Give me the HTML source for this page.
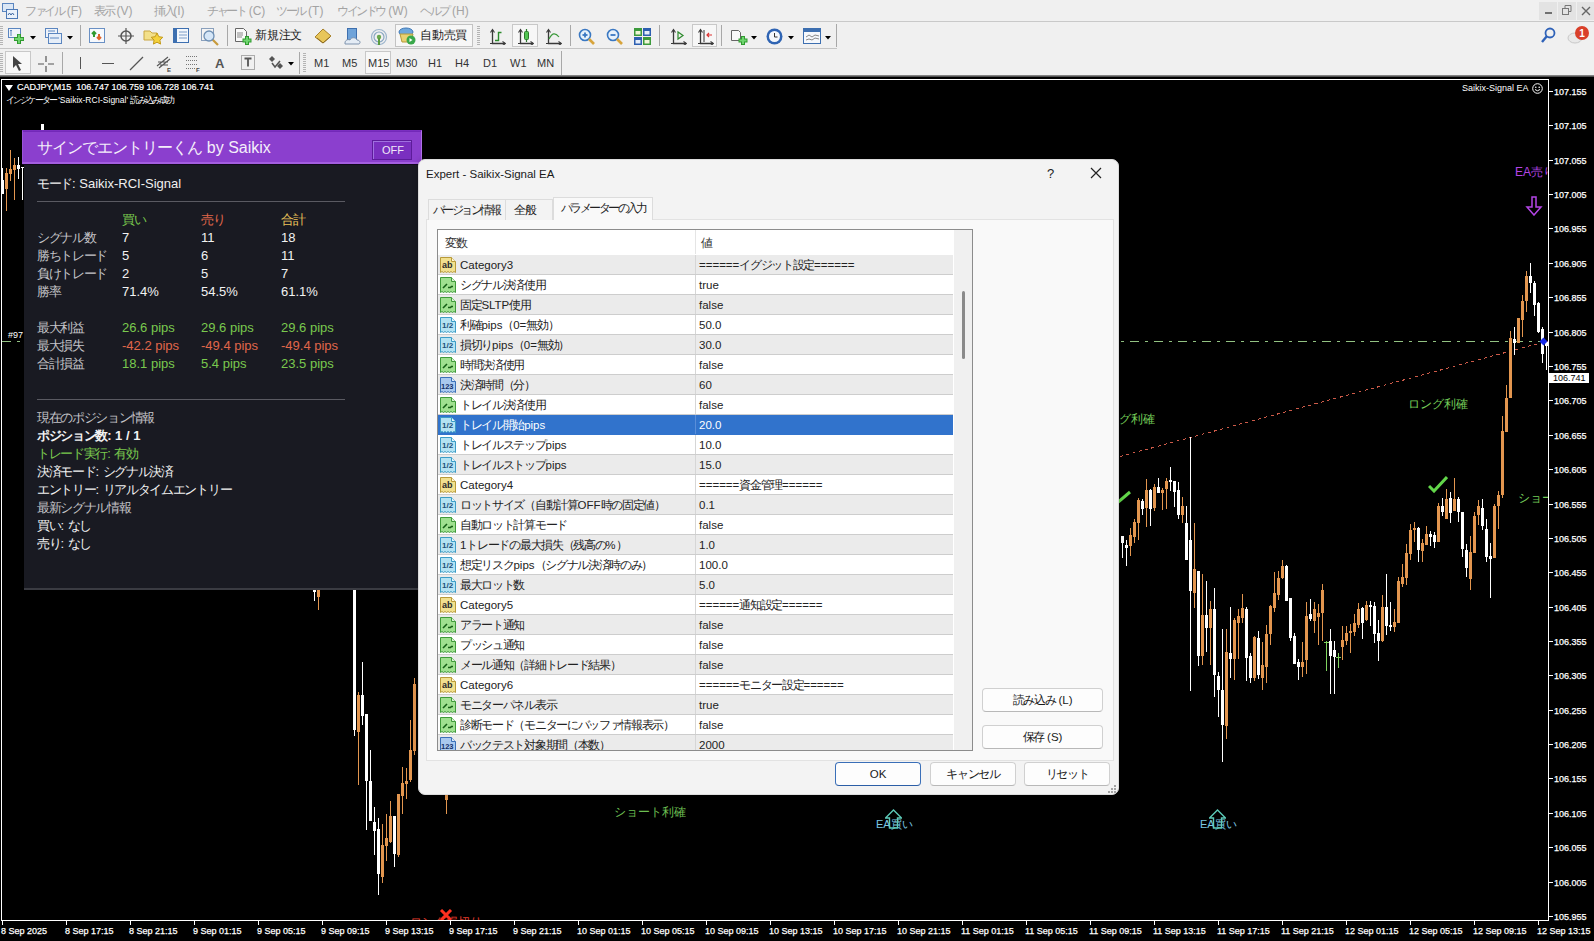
<!DOCTYPE html><html><head><meta charset="utf-8"><style>
*{margin:0;padding:0;box-sizing:border-box}
html,body{width:1594px;height:941px;overflow:hidden;background:#000;font-family:"Liberation Sans",sans-serif}
div,svg{position:absolute}
.t{white-space:nowrap;line-height:1}
i{display:inline-block;width:var(--cw,.93em);font-style:normal}
</style></head><body><div style="left:0px;top:0px;width:1594px;height:21px;background:#f0f0f0"></div><div style="left:0px;top:21px;width:1594px;height:1px;background:#c9c9c9"></div><svg style="left:2px;top:3px" width="16" height="16" viewBox="0 0 16 16"><rect x="0.5" y="0.5" width="11" height="8" fill="#dbe7f5" stroke="#5b86c0"/><rect x="4.5" y="6.5" width="11" height="9" fill="#eaf1fa" stroke="#4d79b5"/><path d="M6 12l1.5-2 1.5 2 1.5-2 1.5 2" stroke="#3c66a0" fill="none"/></svg><div class="t" style="left:25px;top:5px;font-size:12px;color:#a3a3a3;--cw:.8em"><i>フ</i><i>ァ</i><i>イ</i><i>ル</i> (F)</div><div class="t" style="left:94px;top:5px;font-size:12px;color:#a3a3a3;--cw:.8em"><i>表</i><i>示</i> (V)</div><div class="t" style="left:154px;top:5px;font-size:12px;color:#a3a3a3;--cw:.8em"><i>挿</i><i>入</i>(I)</div><div class="t" style="left:207px;top:5px;font-size:12px;color:#a3a3a3;--cw:.8em"><i>チ</i><i>ャ</i><i>ー</i><i>ト</i> (C)</div><div class="t" style="left:276px;top:5px;font-size:12px;color:#a3a3a3;--cw:.8em"><i>ツ</i><i>ー</i><i>ル</i> (T)</div><div class="t" style="left:337px;top:5px;font-size:12px;color:#a3a3a3;--cw:.8em"><i>ウ</i><i>イ</i><i>ン</i><i>ド</i><i>ウ</i> (W)</div><div class="t" style="left:420px;top:5px;font-size:12px;color:#a3a3a3;--cw:.8em"><i>ヘ</i><i>ル</i><i>プ</i> (H)</div><div style="left:1539px;top:2px;width:18px;height:18px;background:#e3e3e3"></div><div style="left:1558px;top:2px;width:18px;height:18px;background:#e3e3e3"></div><div style="left:1577px;top:2px;width:18px;height:18px;background:#e3e3e3"></div><div style="left:1545px;top:12px;width:7px;height:2px;background:#707070"></div><svg style="left:1562px;top:5px" width="10" height="10"><rect x="0.5" y="3.5" width="6" height="6" fill="none" stroke="#777"/><path d="M3 3.5V0.5h6v6H6.5" fill="none" stroke="#777"/></svg><svg style="left:1581px;top:6px" width="10" height="10"><path d="M1 1l8 8M9 1l-8 8" stroke="#666" stroke-width="1.4"/></svg><div style="left:0px;top:22px;width:1594px;height:27px;background:#f0f0f0"></div><div style="left:0px;top:48px;width:837px;height:1px;background:#c4c4c4"></div><div style="left:0px;top:26px;width:3px;height:1px;background:#b4b4b4"></div><div style="left:0px;top:28px;width:3px;height:1px;background:#b4b4b4"></div><div style="left:0px;top:30px;width:3px;height:1px;background:#b4b4b4"></div><div style="left:0px;top:32px;width:3px;height:1px;background:#b4b4b4"></div><div style="left:0px;top:34px;width:3px;height:1px;background:#b4b4b4"></div><div style="left:0px;top:36px;width:3px;height:1px;background:#b4b4b4"></div><div style="left:0px;top:38px;width:3px;height:1px;background:#b4b4b4"></div><div style="left:0px;top:40px;width:3px;height:1px;background:#b4b4b4"></div><div style="left:0px;top:42px;width:3px;height:1px;background:#b4b4b4"></div><div style="left:0px;top:44px;width:3px;height:1px;background:#b4b4b4"></div><svg style="left:8px;top:28px" width="18" height="16" viewBox="0 0 18 16"><rect x="0.5" y="0.5" width="12" height="9" fill="#eef3fa" stroke="#5b86c0"/><path d="M3 2v6M2 3l1-1 1 1" stroke="#5b86c0" fill="none"/><path d="M11 6v10M6 11h10" stroke="#2f9a2f" stroke-width="4"/><path d="M11 6.8v8.4M6.8 11h8.4" stroke="#6fd56f" stroke-width="2"/></svg><svg style="left:30px;top:36px" width="6" height="4" viewBox="0 0 6 4"><path d="M0 0h6L3 3.5z" fill="#000"/></svg><svg style="left:45px;top:28px" width="18" height="16" viewBox="0 0 18 16"><rect x="0.5" y="0.5" width="12" height="9" fill="#eef3fa" stroke="#5b86c0"/><rect x="3.5" y="5.5" width="13" height="10" fill="#e6eef8" stroke="#5b86c0"/><path d="M3 3h7M5 10h9" stroke="#5b86c0"/></svg><svg style="left:67px;top:36px" width="6" height="4" viewBox="0 0 6 4"><path d="M0 0h6L3 3.5z" fill="#000"/></svg><div style="left:80px;top:25px;width:1px;height:21px;background:#a8a8a8"></div><svg style="left:89px;top:28px" width="17" height="16" viewBox="0 0 17 16"><rect x="0.5" y="0.5" width="15" height="14" fill="#f6f9fd" stroke="#6a90c4"/><path d="M5 9V4M3 6l2-2 2 2" stroke="#2f9a2f" stroke-width="2" fill="none"/><path d="M10 6v5M8 9l2 2 2-2" stroke="#e0632a" stroke-width="2" fill="none"/></svg><svg style="left:118px;top:28px" width="16" height="16" viewBox="0 0 16 16"><circle cx="8" cy="8" r="5" fill="none" stroke="#555" stroke-width="1.5"/><path d="M8 0v16M0 8h16" stroke="#555" stroke-width="1.2"/></svg><svg style="left:143px;top:28px" width="20" height="17" viewBox="0 0 20 17"><path d="M1 3h6l2 2h5v7H1z" fill="#f3e08a" stroke="#c9a640"/><path d="M14 5l1.8 3.7 4 .6-2.9 2.8.7 4-3.6-1.9-3.6 1.9.7-4-2.9-2.8 4-.6z" fill="#f5d23c" stroke="#c39a1b"/></svg><svg style="left:173px;top:28px" width="17" height="16" viewBox="0 0 17 16"><rect x="0.5" y="0.5" width="15" height="14" fill="#f3f7fc" stroke="#3d6fb0"/><rect x="1" y="1" width="3" height="13" fill="#3d6fb0"/><path d="M6 4h8M6 7h8M6 10h8" stroke="#7a9cc8"/></svg><svg style="left:201px;top:28px" width="19" height="18" viewBox="0 0 19 18"><rect x="0.5" y="0.5" width="12" height="12" fill="#f4f4f4" stroke="#8aa0bc"/><circle cx="8" cy="8" r="5" fill="#d5e6f7" stroke="#6e8fb3" stroke-width="1.3"/><path d="M12 12l5 5" stroke="#c79a3c" stroke-width="2.2"/></svg><div style="left:227px;top:25px;width:1px;height:21px;background:#a8a8a8"></div><svg style="left:235px;top:28px" width="18" height="17" viewBox="0 0 18 17"><path d="M0.5 0.5h8l3 3v10h-11z" fill="#fafafa" stroke="#666"/><path d="M2 5h6M2 7h6M2 9h5" stroke="#888"/><path d="M12 8v9M7.5 12.5h9" stroke="#2f9a2f" stroke-width="4"/><path d="M12 9v7M8.5 12.5h7" stroke="#6fd56f" stroke-width="2"/></svg><div class="t" style="left:255px;top:29px;font-size:12px;color:#1a1a1a;--cw:.98em"><i>新</i><i>規</i><i>注</i><i>文</i></div><svg style="left:314px;top:28px" width="18" height="16" viewBox="0 0 18 16"><path d="M1 9l8-8 8 7-8 7z" fill="#e8c65a" stroke="#a9822a"/><path d="M3 10l6 5 7-6" fill="none" stroke="#8d6c22"/></svg><svg style="left:343px;top:28px" width="18" height="17" viewBox="0 0 18 17"><rect x="4.5" y="0.5" width="9" height="11" fill="#6fa3d9" stroke="#3e6fae"/><path d="M2 15c0-3 3-4 5-3 1-3 6-3 7 0 3 0 4 3 2 4H2z" fill="#e4ecf5" stroke="#7e93ad"/></svg><svg style="left:370px;top:28px" width="18" height="17" viewBox="0 0 18 17"><circle cx="9" cy="9" r="7.5" fill="none" stroke="#9cb5cc" stroke-width="1.2"/><circle cx="9" cy="9" r="5" fill="none" stroke="#8aa7c2" stroke-width="1.2"/><circle cx="9" cy="9" r="2.2" fill="#6aa84f"/><path d="M9 10v7" stroke="#5b9c3f" stroke-width="2"/></svg><div style="left:395px;top:24px;width:78px;height:23px;background:#f7f7f7;border:1px solid #c3c3c3"></div><svg style="left:398px;top:27px" width="18" height="18" viewBox="0 0 18 18"><ellipse cx="8" cy="5" rx="7" ry="4" fill="#6ea7dc" stroke="#3f78b6"/><path d="M2 7l2 8h9l2-8z" fill="#e9d172" stroke="#b59a3a"/><circle cx="13" cy="13" r="4.5" fill="#39a84a"/><path d="M11.5 11v4l3-2z" fill="#fff"/></svg><div class="t" style="left:420px;top:29px;font-size:12px;color:#1a1a1a;--cw:.98em"><i>自</i><i>動</i><i>売</i><i>買</i></div><div style="left:477px;top:26px;width:3px;height:1px;background:#b4b4b4"></div><div style="left:477px;top:28px;width:3px;height:1px;background:#b4b4b4"></div><div style="left:477px;top:30px;width:3px;height:1px;background:#b4b4b4"></div><div style="left:477px;top:32px;width:3px;height:1px;background:#b4b4b4"></div><div style="left:477px;top:34px;width:3px;height:1px;background:#b4b4b4"></div><div style="left:477px;top:36px;width:3px;height:1px;background:#b4b4b4"></div><div style="left:477px;top:38px;width:3px;height:1px;background:#b4b4b4"></div><div style="left:477px;top:40px;width:3px;height:1px;background:#b4b4b4"></div><div style="left:477px;top:42px;width:3px;height:1px;background:#b4b4b4"></div><div style="left:477px;top:44px;width:3px;height:1px;background:#b4b4b4"></div><svg style="left:489px;top:28px" width="17" height="17" viewBox="0 0 17 17"><path d="M3.5 2v13.5H16" stroke="#3a3a3a" stroke-width="1.3" fill="none"/><path d="M1.5 4.5l2-3 2 3M13.5 13.5l3 2-3 2" stroke="#3a3a3a" stroke-width="1.1" fill="none"/><path d="M1 15.5h2.5" stroke="#3a3a3a"/><path d="M6 12.5h3.5V4.5h3" stroke="#2c8a2c" stroke-width="1.4" fill="none"/></svg><div style="left:512px;top:24px;width:26px;height:23px;background:#f7f7f7;border:1px solid #c8c8c8"></div><svg style="left:517px;top:28px" width="17" height="17" viewBox="0 0 17 17"><path d="M3.5 2v13.5H16" stroke="#3a3a3a" stroke-width="1.3" fill="none"/><path d="M1.5 4.5l2-3 2 3M13.5 13.5l3 2-3 2" stroke="#3a3a3a" stroke-width="1.1" fill="none"/><path d="M1 15.5h2.5" stroke="#3a3a3a"/><rect x="7.5" y="3.5" width="4" height="8" rx="1" fill="#52c452" stroke="#2c7a2c"/><path d="M9.5 1v2.5M9.5 11.5v2.5" stroke="#2c7a2c" stroke-width="1.2"/></svg><svg style="left:545px;top:28px" width="17" height="17" viewBox="0 0 17 17"><path d="M3.5 2v13.5H16" stroke="#3a3a3a" stroke-width="1.3" fill="none"/><path d="M1.5 4.5l2-3 2 3M13.5 13.5l3 2-3 2" stroke="#3a3a3a" stroke-width="1.1" fill="none"/><path d="M1 15.5h2.5" stroke="#3a3a3a"/><path d="M4 11c3-6 6-7 10-2" stroke="#3c9a3c" stroke-width="1.2" fill="none"/></svg><div style="left:570px;top:25px;width:1px;height:21px;background:#a8a8a8"></div><svg style="left:578px;top:28px" width="17" height="17" viewBox="0 0 17 17"><circle cx="7" cy="7" r="5.5" fill="#e8f2fb" stroke="#3a78c2" stroke-width="1.6"/><path d="M11 11l5 5" stroke="#d7a43c" stroke-width="2.6"/><path d="M4.5 7h5" stroke="#3a78c2" stroke-width="1.8"/><path d="M7 4.5v5" stroke="#3a78c2" stroke-width="1.8"/></svg><svg style="left:606px;top:28px" width="17" height="17" viewBox="0 0 17 17"><circle cx="7" cy="7" r="5.5" fill="#e8f2fb" stroke="#3a78c2" stroke-width="1.6"/><path d="M11 11l5 5" stroke="#d7a43c" stroke-width="2.6"/><path d="M4.5 7h5" stroke="#3a78c2" stroke-width="1.8"/></svg><svg style="left:634px;top:28px" width="17" height="17" viewBox="0 0 17 17"><rect x="0" y="0" width="8" height="8" fill="#3c9a3c"/><rect x="9" y="0" width="8" height="8" fill="#2d5fb0"/><rect x="0" y="9" width="8" height="8" fill="#2d5fb0"/><rect x="9" y="9" width="8" height="8" fill="#3c9a3c"/><rect x="1.5" y="3" width="5" height="3.5" fill="#f0f6d8"/><rect x="10.5" y="3" width="5" height="3.5" fill="#e6eefa"/><rect x="1.5" y="12" width="5" height="3.5" fill="#e6eefa"/><rect x="10.5" y="12" width="5" height="3.5" fill="#f0f6d8"/></svg><div style="left:659px;top:25px;width:1px;height:21px;background:#a8a8a8"></div><svg style="left:670px;top:28px" width="17" height="17" viewBox="0 0 17 17"><path d="M3.5 2v13.5H16" stroke="#3a3a3a" stroke-width="1.3" fill="none"/><path d="M1.5 4.5l2-3 2 3M13.5 13.5l3 2-3 2" stroke="#3a3a3a" stroke-width="1.1" fill="none"/><path d="M1 15.5h2.5" stroke="#3a3a3a"/><path d="M8 4v7l5-3.5z" fill="none" stroke="#2c8a2c" stroke-width="1.2"/></svg><div style="left:692px;top:24px;width:25px;height:23px;background:#f7f7f7;border:1px solid #c8c8c8"></div><svg style="left:697px;top:28px" width="17" height="17" viewBox="0 0 17 17"><path d="M3.5 2v13.5H16" stroke="#3a3a3a" stroke-width="1.3" fill="none"/><path d="M1.5 4.5l2-3 2 3M13.5 13.5l3 2-3 2" stroke="#3a3a3a" stroke-width="1.1" fill="none"/><path d="M1 15.5h2.5" stroke="#3a3a3a"/><path d="M7 2v12" stroke="#333"/><path d="M15 7h-5M12 5l-2 2 2 2" stroke="#d33" stroke-width="1.2" fill="none"/></svg><div style="left:721px;top:25px;width:1px;height:21px;background:#a8a8a8"></div><svg style="left:731px;top:28px" width="18" height="18" viewBox="0 0 18 18"><path d="M0.5 2.5h7l2 2v8h-9z" fill="#fafafa" stroke="#666"/><path d="M12 8v9M7.5 12.5h9" stroke="#2f9a2f" stroke-width="4"/><path d="M12 9v7M8.5 12.5h7" stroke="#6fd56f" stroke-width="2"/></svg><svg style="left:751px;top:36px" width="6" height="4" viewBox="0 0 6 4"><path d="M0 0h6L3 3.5z" fill="#000"/></svg><svg style="left:766px;top:28px" width="17" height="17" viewBox="0 0 17 17"><circle cx="8.5" cy="8.5" r="8" fill="#2f64b3"/><circle cx="8.5" cy="8.5" r="5.5" fill="#f4f8fc"/><path d="M8.5 5v4h3" stroke="#333" fill="none"/></svg><svg style="left:788px;top:36px" width="6" height="4" viewBox="0 0 6 4"><path d="M0 0h6L3 3.5z" fill="#000"/></svg><svg style="left:803px;top:28px" width="18" height="16" viewBox="0 0 18 16"><rect x="0.5" y="0.5" width="17" height="15" fill="#f5f8fc" stroke="#3d6fb0"/><rect x="1" y="1" width="16" height="3" fill="#3d6fb0"/><path d="M3 9l3-2 3 2 3-2 4 1M3 12l3-1 3 1 3-2 4 1" stroke="#888" fill="none"/></svg><svg style="left:825px;top:36px" width="6" height="4" viewBox="0 0 6 4"><path d="M0 0h6L3 3.5z" fill="#000"/></svg><div style="left:836px;top:24px;width:1px;height:23px;background:#a8a8a8"></div><svg style="left:1540px;top:27px" width="16" height="17" viewBox="0 0 16 17"><circle cx="10" cy="6" r="4.5" fill="none" stroke="#2f62b8" stroke-width="1.8"/><path d="M7 9l-5 6" stroke="#2f62b8" stroke-width="2.4"/></svg><svg style="left:1566px;top:25px" width="26" height="21" viewBox="0 0 26 21"><ellipse cx="9" cy="13" rx="7" ry="5" fill="#e9e9e9" stroke="#c8c8c8"/><circle cx="16" cy="8" r="7" fill="#d9402a"/><text x="16" y="12" font-size="10" font-family="Liberation Sans" fill="#fff" text-anchor="middle" font-weight="bold">1</text></svg><div style="left:0px;top:49px;width:1594px;height:26px;background:#f0f0f0"></div><div style="left:0px;top:75px;width:1594px;height:2px;background:linear-gradient(#9a9a9a,#3a3a3a)"></div><div style="left:0px;top:53px;width:3px;height:1px;background:#b4b4b4"></div><div style="left:0px;top:55px;width:3px;height:1px;background:#b4b4b4"></div><div style="left:0px;top:57px;width:3px;height:1px;background:#b4b4b4"></div><div style="left:0px;top:59px;width:3px;height:1px;background:#b4b4b4"></div><div style="left:0px;top:61px;width:3px;height:1px;background:#b4b4b4"></div><div style="left:0px;top:63px;width:3px;height:1px;background:#b4b4b4"></div><div style="left:0px;top:65px;width:3px;height:1px;background:#b4b4b4"></div><div style="left:0px;top:67px;width:3px;height:1px;background:#b4b4b4"></div><div style="left:0px;top:69px;width:3px;height:1px;background:#b4b4b4"></div><div style="left:0px;top:71px;width:3px;height:1px;background:#b4b4b4"></div><div style="left:5px;top:51px;width:26px;height:23px;background:#f7f7f7;border:1px solid #c8c8c8"></div><svg style="left:12px;top:55px" width="11" height="16" viewBox="0 0 11 16"><path d="M1 1v12l3-3 3 6 2-1-3-6h4z" fill="#444"/></svg><svg style="left:38px;top:56px" width="16" height="16" viewBox="0 0 16 16"><path d="M8 0v6M8 10v6M0 8h6M10 8h6" stroke="#555" stroke-width="1.2"/></svg><div style="left:62px;top:52px;width:1px;height:22px;background:#a8a8a8"></div><div style="left:80px;top:57px;width:1px;height:12px;background:#555"></div><div style="left:102px;top:63px;width:12px;height:1px;background:#555"></div><svg style="left:129px;top:56px" width="15" height="15" viewBox="0 0 15 15"><path d="M1 14L14 1" stroke="#555" stroke-width="1.2"/></svg><svg style="left:156px;top:55px" width="16" height="18" viewBox="0 0 16 18"><path d="M1 11L12 2M3 13L14 4M2 7h10M4 10h8" stroke="#555" stroke-width="1.1"/><text x="11" y="17" font-size="6" font-family="Liberation Sans" font-weight="bold" fill="#444">E</text></svg><svg style="left:185px;top:55px" width="16" height="18" viewBox="0 0 16 18"><path d="M1 1.5h12M1 5.5h12M1 9.5h12M1 13.5h9" stroke="#777" stroke-dasharray="1 1"/><text x="11" y="17" font-size="6" font-family="Liberation Sans" font-weight="bold" fill="#444">F</text></svg><div class="t" style="left:215px;top:57px;font-size:13px;font-weight:bold;color:#555">A</div><svg style="left:241px;top:55px" width="14" height="15" viewBox="0 0 14 15"><rect x="0.5" y="0.5" width="13" height="14" fill="none" stroke="#666" stroke-dasharray="1 1"/><path d="M3.5 3.5h7M7 3.5v8" stroke="#555" stroke-width="1.8"/></svg><svg style="left:268px;top:56px" width="16" height="14" viewBox="0 0 16 14"><path d="M4 0l3 3-3 3-3-3z" fill="#555"/><path d="M4 7l3 4 5-6" stroke="#555" stroke-width="1.5" fill="none"/><path d="M12 7l3 3-3 3-3-3z" fill="#555"/></svg><svg style="left:288px;top:62px" width="6" height="4" viewBox="0 0 6 4"><path d="M0 0h6L3 3.5z" fill="#000"/></svg><div style="left:299px;top:52px;width:1px;height:22px;background:#a8a8a8"></div><div style="left:303px;top:53px;width:3px;height:1px;background:#b4b4b4"></div><div style="left:303px;top:55px;width:3px;height:1px;background:#b4b4b4"></div><div style="left:303px;top:57px;width:3px;height:1px;background:#b4b4b4"></div><div style="left:303px;top:59px;width:3px;height:1px;background:#b4b4b4"></div><div style="left:303px;top:61px;width:3px;height:1px;background:#b4b4b4"></div><div style="left:303px;top:63px;width:3px;height:1px;background:#b4b4b4"></div><div style="left:303px;top:65px;width:3px;height:1px;background:#b4b4b4"></div><div style="left:303px;top:67px;width:3px;height:1px;background:#b4b4b4"></div><div style="left:303px;top:69px;width:3px;height:1px;background:#b4b4b4"></div><div style="left:303px;top:71px;width:3px;height:1px;background:#b4b4b4"></div><div style="left:365px;top:51px;width:26px;height:23px;background:#f7f7f7;border:1px solid #c8c8c8"></div><div class="t" style="left:314px;top:58px;font-size:11px;color:#333">M1</div><div class="t" style="left:342px;top:58px;font-size:11px;color:#333">M5</div><div class="t" style="left:368px;top:58px;font-size:11px;color:#333">M15</div><div class="t" style="left:396px;top:58px;font-size:11px;color:#333">M30</div><div class="t" style="left:428px;top:58px;font-size:11px;color:#333">H1</div><div class="t" style="left:455px;top:58px;font-size:11px;color:#333">H4</div><div class="t" style="left:483px;top:58px;font-size:11px;color:#333">D1</div><div class="t" style="left:510px;top:58px;font-size:11px;color:#333">W1</div><div class="t" style="left:537px;top:58px;font-size:11px;color:#333">MN</div><div style="left:561px;top:51px;width:1px;height:24px;background:#a8a8a8"></div><div style="left:0px;top:77px;width:1594px;height:864px;background:#000"></div><div style="left:1px;top:79px;width:1548px;height:842px;border:1px solid #fff;border-right:1px solid #fff"></div><svg style="left:0;top:0" width="1594" height="941" shape-rendering="crispEdges"><style>.ax{font:9px "Liberation Sans",sans-serif;fill:#fff;stroke:#fff;stroke-width:.25px}</style><rect x="1549" y="91" width="4" height="1" fill="#fff"/><text x="1554" y="95" class="ax">107.155</text><rect x="1549" y="125" width="4" height="1" fill="#fff"/><text x="1554" y="129" class="ax">107.105</text><rect x="1549" y="160" width="4" height="1" fill="#fff"/><text x="1554" y="164" class="ax">107.055</text><rect x="1549" y="194" width="4" height="1" fill="#fff"/><text x="1554" y="198" class="ax">107.005</text><rect x="1549" y="228" width="4" height="1" fill="#fff"/><text x="1554" y="232" class="ax">106.955</text><rect x="1549" y="263" width="4" height="1" fill="#fff"/><text x="1554" y="267" class="ax">106.905</text><rect x="1549" y="297" width="4" height="1" fill="#fff"/><text x="1554" y="301" class="ax">106.855</text><rect x="1549" y="332" width="4" height="1" fill="#fff"/><text x="1554" y="336" class="ax">106.805</text><rect x="1549" y="366" width="4" height="1" fill="#fff"/><text x="1554" y="370" class="ax">106.755</text><rect x="1549" y="400" width="4" height="1" fill="#fff"/><text x="1554" y="404" class="ax">106.705</text><rect x="1549" y="435" width="4" height="1" fill="#fff"/><text x="1554" y="439" class="ax">106.655</text><rect x="1549" y="469" width="4" height="1" fill="#fff"/><text x="1554" y="473" class="ax">106.605</text><rect x="1549" y="504" width="4" height="1" fill="#fff"/><text x="1554" y="508" class="ax">106.555</text><rect x="1549" y="538" width="4" height="1" fill="#fff"/><text x="1554" y="542" class="ax">106.505</text><rect x="1549" y="572" width="4" height="1" fill="#fff"/><text x="1554" y="576" class="ax">106.455</text><rect x="1549" y="607" width="4" height="1" fill="#fff"/><text x="1554" y="611" class="ax">106.405</text><rect x="1549" y="641" width="4" height="1" fill="#fff"/><text x="1554" y="645" class="ax">106.355</text><rect x="1549" y="675" width="4" height="1" fill="#fff"/><text x="1554" y="679" class="ax">106.305</text><rect x="1549" y="710" width="4" height="1" fill="#fff"/><text x="1554" y="714" class="ax">106.255</text><rect x="1549" y="744" width="4" height="1" fill="#fff"/><text x="1554" y="748" class="ax">106.205</text><rect x="1549" y="778" width="4" height="1" fill="#fff"/><text x="1554" y="782" class="ax">106.155</text><rect x="1549" y="813" width="4" height="1" fill="#fff"/><text x="1554" y="817" class="ax">106.105</text><rect x="1549" y="847" width="4" height="1" fill="#fff"/><text x="1554" y="851" class="ax">106.055</text><rect x="1549" y="882" width="4" height="1" fill="#fff"/><text x="1554" y="886" class="ax">106.005</text><rect x="1549" y="916" width="4" height="1" fill="#fff"/><text x="1554" y="920" class="ax">105.955</text><rect x="2" y="921" width="1" height="4" fill="#fff"/><text x="1" y="934" class="ax">8 Sep 2025</text><rect x="66" y="921" width="1" height="4" fill="#fff"/><text x="65" y="934" class="ax">8 Sep 17:15</text><rect x="130" y="921" width="1" height="4" fill="#fff"/><text x="129" y="934" class="ax">8 Sep 21:15</text><rect x="194" y="921" width="1" height="4" fill="#fff"/><text x="193" y="934" class="ax">9 Sep 01:15</text><rect x="258" y="921" width="1" height="4" fill="#fff"/><text x="257" y="934" class="ax">9 Sep 05:15</text><rect x="322" y="921" width="1" height="4" fill="#fff"/><text x="321" y="934" class="ax">9 Sep 09:15</text><rect x="386" y="921" width="1" height="4" fill="#fff"/><text x="385" y="934" class="ax">9 Sep 13:15</text><rect x="450" y="921" width="1" height="4" fill="#fff"/><text x="449" y="934" class="ax">9 Sep 17:15</text><rect x="514" y="921" width="1" height="4" fill="#fff"/><text x="513" y="934" class="ax">9 Sep 21:15</text><rect x="578" y="921" width="1" height="4" fill="#fff"/><text x="577" y="934" class="ax">10 Sep 01:15</text><rect x="642" y="921" width="1" height="4" fill="#fff"/><text x="641" y="934" class="ax">10 Sep 05:15</text><rect x="706" y="921" width="1" height="4" fill="#fff"/><text x="705" y="934" class="ax">10 Sep 09:15</text><rect x="770" y="921" width="1" height="4" fill="#fff"/><text x="769" y="934" class="ax">10 Sep 13:15</text><rect x="834" y="921" width="1" height="4" fill="#fff"/><text x="833" y="934" class="ax">10 Sep 17:15</text><rect x="898" y="921" width="1" height="4" fill="#fff"/><text x="897" y="934" class="ax">10 Sep 21:15</text><rect x="962" y="921" width="1" height="4" fill="#fff"/><text x="961" y="934" class="ax">11 Sep 01:15</text><rect x="1026" y="921" width="1" height="4" fill="#fff"/><text x="1025" y="934" class="ax">11 Sep 05:15</text><rect x="1090" y="921" width="1" height="4" fill="#fff"/><text x="1089" y="934" class="ax">11 Sep 09:15</text><rect x="1154" y="921" width="1" height="4" fill="#fff"/><text x="1153" y="934" class="ax">11 Sep 13:15</text><rect x="1218" y="921" width="1" height="4" fill="#fff"/><text x="1217" y="934" class="ax">11 Sep 17:15</text><rect x="1282" y="921" width="1" height="4" fill="#fff"/><text x="1281" y="934" class="ax">11 Sep 21:15</text><rect x="1346" y="921" width="1" height="4" fill="#fff"/><text x="1345" y="934" class="ax">12 Sep 01:15</text><rect x="1410" y="921" width="1" height="4" fill="#fff"/><text x="1409" y="934" class="ax">12 Sep 05:15</text><rect x="1474" y="921" width="1" height="4" fill="#fff"/><text x="1473" y="934" class="ax">12 Sep 09:15</text><rect x="1538" y="921" width="1" height="4" fill="#fff"/><text x="1537" y="934" class="ax">12 Sep 13:15</text><line x1="2" y1="341.5" x2="1548" y2="341.5" stroke="#92c282" stroke-width="1" stroke-dasharray="9 6 3 6"/><line x1="1120" y1="456.5" x2="1548" y2="341" stroke="#cc5a48" stroke-width="1" stroke-dasharray="3 3.5"/><rect x="2" y="168" width="1" height="26" fill="#ffffff"/><rect x="1" y="180" width="3" height="14" fill="#ffffff"/><rect x="6" y="168" width="1" height="43" fill="#e3964f"/><rect x="5" y="173" width="3" height="16" fill="#e3964f"/><rect x="10" y="150" width="1" height="31" fill="#e3964f"/><rect x="9" y="169" width="3" height="5" fill="#e3964f"/><rect x="14" y="158" width="1" height="42" fill="#e3964f"/><rect x="13" y="165" width="3" height="5" fill="#e3964f"/><rect x="18" y="157" width="1" height="22" fill="#ffffff"/><rect x="17" y="165" width="3" height="4" fill="#ffffff"/><rect x="22" y="167" width="1" height="33" fill="#ffffff"/><rect x="21" y="167" width="3" height="1" fill="#ffffff"/><rect x="314" y="589" width="1" height="12" fill="#ffffff"/><rect x="313" y="589" width="3" height="3" fill="#ffffff"/><rect x="318" y="589" width="1" height="21" fill="#e3964f"/><rect x="317" y="589" width="3" height="8" fill="#e3964f"/><rect x="354" y="589" width="1" height="147" fill="#ffffff"/><rect x="353" y="589" width="3" height="141" fill="#ffffff"/><rect x="358" y="692" width="1" height="93" fill="#e3964f"/><rect x="357" y="695" width="3" height="37" fill="#e3964f"/><rect x="362" y="662" width="1" height="63" fill="#ffffff"/><rect x="361" y="695" width="3" height="21" fill="#ffffff"/><rect x="366" y="714" width="1" height="116" fill="#ffffff"/><rect x="365" y="714" width="3" height="67" fill="#ffffff"/><rect x="370" y="750" width="1" height="71" fill="#ffffff"/><rect x="369" y="781" width="3" height="40" fill="#ffffff"/><rect x="374" y="807" width="1" height="48" fill="#ffffff"/><rect x="373" y="822" width="3" height="9" fill="#ffffff"/><rect x="378" y="818" width="1" height="77" fill="#ffffff"/><rect x="377" y="829" width="3" height="45" fill="#ffffff"/><rect x="382" y="824" width="1" height="59" fill="#e3964f"/><rect x="381" y="845" width="3" height="32" fill="#e3964f"/><rect x="386" y="814" width="1" height="47" fill="#e3964f"/><rect x="385" y="838" width="3" height="8" fill="#e3964f"/><rect x="390" y="801" width="1" height="42" fill="#e3964f"/><rect x="389" y="816" width="3" height="26" fill="#e3964f"/><rect x="394" y="816" width="1" height="51" fill="#ffffff"/><rect x="393" y="816" width="3" height="38" fill="#ffffff"/><rect x="398" y="794" width="1" height="63" fill="#e3964f"/><rect x="397" y="794" width="3" height="61" fill="#e3964f"/><rect x="402" y="767" width="1" height="47" fill="#e3964f"/><rect x="401" y="783" width="3" height="13" fill="#e3964f"/><rect x="406" y="768" width="1" height="31" fill="#e3964f"/><rect x="405" y="781" width="3" height="3" fill="#e3964f"/><rect x="410" y="720" width="1" height="62" fill="#e3964f"/><rect x="409" y="750" width="3" height="30" fill="#e3964f"/><rect x="414" y="678" width="1" height="77" fill="#e3964f"/><rect x="413" y="684" width="3" height="67" fill="#e3964f"/><rect x="446" y="780" width="1" height="34" fill="#e3964f"/><rect x="445" y="790" width="3" height="10" fill="#e3964f"/><rect x="1122" y="536" width="1" height="22" fill="#ffffff"/><rect x="1121" y="536" width="3" height="7" fill="#ffffff"/><rect x="1126" y="540" width="1" height="26" fill="#ffffff"/><rect x="1125" y="545" width="3" height="3" fill="#ffffff"/><rect x="1130" y="528" width="1" height="28" fill="#e3964f"/><rect x="1129" y="535" width="3" height="11" fill="#e3964f"/><rect x="1134" y="519" width="1" height="24" fill="#e3964f"/><rect x="1133" y="522" width="3" height="15" fill="#e3964f"/><rect x="1138" y="498" width="1" height="42" fill="#e3964f"/><rect x="1137" y="500" width="3" height="23" fill="#e3964f"/><rect x="1142" y="499" width="1" height="16" fill="#ffffff"/><rect x="1141" y="501" width="3" height="8" fill="#ffffff"/><rect x="1146" y="479" width="1" height="48" fill="#e3964f"/><rect x="1145" y="490" width="3" height="18" fill="#e3964f"/><rect x="1150" y="489" width="1" height="37" fill="#ffffff"/><rect x="1149" y="490" width="3" height="19" fill="#ffffff"/><rect x="1154" y="484" width="1" height="27" fill="#e3964f"/><rect x="1153" y="487" width="3" height="21" fill="#e3964f"/><rect x="1158" y="478" width="1" height="15" fill="#ffffff"/><rect x="1157" y="487" width="3" height="6" fill="#ffffff"/><rect x="1162" y="488" width="1" height="22" fill="#e3964f"/><rect x="1161" y="490" width="3" height="3" fill="#e3964f"/><rect x="1166" y="478" width="1" height="31" fill="#e3964f"/><rect x="1165" y="481" width="3" height="8" fill="#e3964f"/><rect x="1170" y="467" width="1" height="24" fill="#ffffff"/><rect x="1169" y="480" width="3" height="2" fill="#ffffff"/><rect x="1174" y="481" width="1" height="26" fill="#ffffff"/><rect x="1173" y="481" width="3" height="11" fill="#ffffff"/><rect x="1178" y="482" width="1" height="37" fill="#ffffff"/><rect x="1177" y="490" width="3" height="25" fill="#ffffff"/><rect x="1182" y="497" width="1" height="26" fill="#e3964f"/><rect x="1181" y="506" width="3" height="9" fill="#e3964f"/><rect x="1186" y="506" width="1" height="54" fill="#ffffff"/><rect x="1185" y="523" width="3" height="37" fill="#ffffff"/><rect x="1190" y="437" width="1" height="254" fill="#ffffff"/><rect x="1189" y="540" width="3" height="51" fill="#ffffff"/><rect x="1194" y="523" width="1" height="85" fill="#e3964f"/><rect x="1193" y="569" width="3" height="24" fill="#e3964f"/><rect x="1198" y="571" width="1" height="95" fill="#ffffff"/><rect x="1197" y="571" width="3" height="85" fill="#ffffff"/><rect x="1202" y="574" width="1" height="91" fill="#e3964f"/><rect x="1201" y="615" width="3" height="41" fill="#e3964f"/><rect x="1206" y="581" width="1" height="71" fill="#ffffff"/><rect x="1205" y="615" width="3" height="13" fill="#ffffff"/><rect x="1210" y="601" width="1" height="64" fill="#e3964f"/><rect x="1209" y="609" width="3" height="19" fill="#e3964f"/><rect x="1214" y="588" width="1" height="109" fill="#ffffff"/><rect x="1213" y="609" width="3" height="66" fill="#ffffff"/><rect x="1218" y="672" width="1" height="45" fill="#ffffff"/><rect x="1217" y="676" width="3" height="14" fill="#ffffff"/><rect x="1222" y="629" width="1" height="133" fill="#ffffff"/><rect x="1221" y="690" width="3" height="35" fill="#ffffff"/><rect x="1226" y="629" width="1" height="110" fill="#e3964f"/><rect x="1225" y="652" width="3" height="74" fill="#e3964f"/><rect x="1230" y="607" width="1" height="71" fill="#ffffff"/><rect x="1229" y="653" width="3" height="6" fill="#ffffff"/><rect x="1234" y="618" width="1" height="62" fill="#e3964f"/><rect x="1233" y="620" width="3" height="39" fill="#e3964f"/><rect x="1238" y="609" width="1" height="50" fill="#e3964f"/><rect x="1237" y="616" width="3" height="7" fill="#e3964f"/><rect x="1242" y="594" width="1" height="29" fill="#e3964f"/><rect x="1241" y="608" width="3" height="10" fill="#e3964f"/><rect x="1246" y="607" width="1" height="74" fill="#ffffff"/><rect x="1245" y="609" width="3" height="49" fill="#ffffff"/><rect x="1250" y="653" width="1" height="30" fill="#ffffff"/><rect x="1249" y="656" width="3" height="22" fill="#ffffff"/><rect x="1254" y="636" width="1" height="45" fill="#e3964f"/><rect x="1253" y="637" width="3" height="41" fill="#e3964f"/><rect x="1258" y="631" width="1" height="48" fill="#ffffff"/><rect x="1257" y="638" width="3" height="37" fill="#ffffff"/><rect x="1262" y="642" width="1" height="48" fill="#e3964f"/><rect x="1261" y="665" width="3" height="13" fill="#e3964f"/><rect x="1266" y="625" width="1" height="58" fill="#e3964f"/><rect x="1265" y="634" width="3" height="33" fill="#e3964f"/><rect x="1270" y="605" width="1" height="40" fill="#e3964f"/><rect x="1269" y="606" width="3" height="28" fill="#e3964f"/><rect x="1274" y="572" width="1" height="40" fill="#e3964f"/><rect x="1273" y="593" width="3" height="15" fill="#e3964f"/><rect x="1278" y="571" width="1" height="29" fill="#e3964f"/><rect x="1277" y="578" width="3" height="17" fill="#e3964f"/><rect x="1282" y="560" width="1" height="19" fill="#e3964f"/><rect x="1281" y="566" width="3" height="12" fill="#e3964f"/><rect x="1286" y="565" width="1" height="36" fill="#ffffff"/><rect x="1285" y="566" width="3" height="35" fill="#ffffff"/><rect x="1290" y="598" width="1" height="43" fill="#ffffff"/><rect x="1289" y="598" width="3" height="40" fill="#ffffff"/><rect x="1294" y="633" width="1" height="31" fill="#ffffff"/><rect x="1293" y="636" width="3" height="28" fill="#ffffff"/><rect x="1298" y="659" width="1" height="21" fill="#ffffff"/><rect x="1297" y="662" width="3" height="5" fill="#ffffff"/><rect x="1302" y="642" width="1" height="35" fill="#e3964f"/><rect x="1301" y="662" width="3" height="5" fill="#e3964f"/><rect x="1306" y="602" width="1" height="72" fill="#e3964f"/><rect x="1305" y="616" width="3" height="44" fill="#e3964f"/><rect x="1310" y="599" width="1" height="22" fill="#ffffff"/><rect x="1309" y="614" width="3" height="5" fill="#ffffff"/><rect x="1314" y="602" width="1" height="31" fill="#e3964f"/><rect x="1313" y="609" width="3" height="12" fill="#e3964f"/><rect x="1318" y="604" width="1" height="41" fill="#e3964f"/><rect x="1317" y="613" width="3" height="4" fill="#e3964f"/><rect x="1322" y="584" width="1" height="57" fill="#e3964f"/><rect x="1321" y="590" width="3" height="23" fill="#e3964f"/><rect x="1326" y="641" width="1" height="30" fill="#7fd35f"/><rect x="1324" y="642" width="5" height="1" fill="#7fd35f"/><rect x="1330" y="629" width="1" height="65" fill="#ffffff"/><rect x="1329" y="641" width="3" height="15" fill="#ffffff"/><rect x="1334" y="641" width="1" height="53" fill="#ffffff"/><rect x="1333" y="650" width="3" height="7" fill="#ffffff"/><rect x="1338" y="653" width="1" height="15" fill="#7fd35f"/><rect x="1336" y="657" width="5" height="1" fill="#7fd35f"/><rect x="1342" y="626" width="1" height="34" fill="#e3964f"/><rect x="1341" y="640" width="3" height="7" fill="#e3964f"/><rect x="1346" y="626" width="1" height="19" fill="#e3964f"/><rect x="1345" y="633" width="3" height="8" fill="#e3964f"/><rect x="1350" y="624" width="1" height="29" fill="#e3964f"/><rect x="1349" y="631" width="3" height="2" fill="#e3964f"/><rect x="1354" y="614" width="1" height="22" fill="#e3964f"/><rect x="1353" y="623" width="3" height="9" fill="#e3964f"/><rect x="1358" y="603" width="1" height="25" fill="#e3964f"/><rect x="1357" y="609" width="3" height="16" fill="#e3964f"/><rect x="1362" y="607" width="1" height="32" fill="#ffffff"/><rect x="1361" y="608" width="3" height="15" fill="#ffffff"/><rect x="1366" y="601" width="1" height="20" fill="#e3964f"/><rect x="1365" y="605" width="3" height="15" fill="#e3964f"/><rect x="1370" y="601" width="1" height="25" fill="#ffffff"/><rect x="1369" y="605" width="3" height="2" fill="#ffffff"/><rect x="1374" y="602" width="1" height="41" fill="#ffffff"/><rect x="1373" y="606" width="3" height="28" fill="#ffffff"/><rect x="1378" y="620" width="1" height="41" fill="#ffffff"/><rect x="1377" y="633" width="3" height="8" fill="#ffffff"/><rect x="1382" y="595" width="1" height="47" fill="#e3964f"/><rect x="1381" y="607" width="3" height="34" fill="#e3964f"/><rect x="1386" y="574" width="1" height="61" fill="#ffffff"/><rect x="1385" y="607" width="3" height="19" fill="#ffffff"/><rect x="1390" y="602" width="1" height="29" fill="#ffffff"/><rect x="1389" y="625" width="3" height="2" fill="#ffffff"/><rect x="1394" y="609" width="1" height="23" fill="#e3964f"/><rect x="1393" y="622" width="3" height="5" fill="#e3964f"/><rect x="1398" y="577" width="1" height="46" fill="#e3964f"/><rect x="1397" y="581" width="3" height="42" fill="#e3964f"/><rect x="1402" y="564" width="1" height="23" fill="#e3964f"/><rect x="1401" y="577" width="3" height="7" fill="#e3964f"/><rect x="1406" y="544" width="1" height="41" fill="#e3964f"/><rect x="1405" y="553" width="3" height="25" fill="#e3964f"/><rect x="1410" y="524" width="1" height="36" fill="#e3964f"/><rect x="1409" y="530" width="3" height="24" fill="#e3964f"/><rect x="1414" y="522" width="1" height="20" fill="#e3964f"/><rect x="1413" y="528" width="3" height="2" fill="#e3964f"/><rect x="1418" y="527" width="1" height="35" fill="#ffffff"/><rect x="1417" y="528" width="3" height="22" fill="#ffffff"/><rect x="1422" y="539" width="1" height="23" fill="#e3964f"/><rect x="1421" y="543" width="3" height="8" fill="#e3964f"/><rect x="1426" y="526" width="1" height="19" fill="#e3964f"/><rect x="1425" y="534" width="3" height="11" fill="#e3964f"/><rect x="1430" y="531" width="1" height="15" fill="#ffffff"/><rect x="1429" y="534" width="3" height="3" fill="#ffffff"/><rect x="1434" y="532" width="1" height="16" fill="#ffffff"/><rect x="1433" y="535" width="3" height="7" fill="#ffffff"/><rect x="1438" y="503" width="1" height="39" fill="#e3964f"/><rect x="1437" y="506" width="3" height="36" fill="#e3964f"/><rect x="1442" y="498" width="1" height="18" fill="#ffffff"/><rect x="1441" y="506" width="3" height="6" fill="#ffffff"/><rect x="1446" y="489" width="1" height="30" fill="#e3964f"/><rect x="1445" y="499" width="3" height="20" fill="#e3964f"/><rect x="1450" y="492" width="1" height="31" fill="#ffffff"/><rect x="1449" y="498" width="3" height="15" fill="#ffffff"/><rect x="1454" y="478" width="1" height="33" fill="#e3964f"/><rect x="1453" y="499" width="3" height="12" fill="#e3964f"/><rect x="1458" y="497" width="1" height="25" fill="#ffffff"/><rect x="1457" y="499" width="3" height="13" fill="#ffffff"/><rect x="1462" y="512" width="1" height="45" fill="#ffffff"/><rect x="1461" y="512" width="3" height="37" fill="#ffffff"/><rect x="1466" y="544" width="1" height="33" fill="#ffffff"/><rect x="1465" y="550" width="3" height="18" fill="#ffffff"/><rect x="1470" y="536" width="1" height="54" fill="#e3964f"/><rect x="1469" y="552" width="3" height="27" fill="#e3964f"/><rect x="1474" y="512" width="1" height="41" fill="#e3964f"/><rect x="1473" y="516" width="3" height="37" fill="#e3964f"/><rect x="1478" y="500" width="1" height="25" fill="#e3964f"/><rect x="1477" y="506" width="3" height="9" fill="#e3964f"/><rect x="1482" y="499" width="1" height="31" fill="#ffffff"/><rect x="1481" y="508" width="3" height="18" fill="#ffffff"/><rect x="1486" y="519" width="1" height="43" fill="#ffffff"/><rect x="1485" y="529" width="3" height="28" fill="#ffffff"/><rect x="1490" y="543" width="1" height="55" fill="#ffffff"/><rect x="1489" y="556" width="3" height="3" fill="#ffffff"/><rect x="1494" y="504" width="1" height="54" fill="#e3964f"/><rect x="1493" y="506" width="3" height="52" fill="#e3964f"/><rect x="1498" y="491" width="1" height="38" fill="#e3964f"/><rect x="1497" y="495" width="3" height="11" fill="#e3964f"/><rect x="1502" y="416" width="1" height="82" fill="#e3964f"/><rect x="1501" y="431" width="3" height="64" fill="#e3964f"/><rect x="1506" y="385" width="1" height="47" fill="#e3964f"/><rect x="1505" y="398" width="3" height="34" fill="#e3964f"/><rect x="1510" y="331" width="1" height="67" fill="#e3964f"/><rect x="1509" y="338" width="3" height="60" fill="#e3964f"/><rect x="1514" y="327" width="1" height="28" fill="#ffffff"/><rect x="1513" y="339" width="3" height="4" fill="#ffffff"/><rect x="1518" y="318" width="1" height="25" fill="#e3964f"/><rect x="1517" y="318" width="3" height="25" fill="#e3964f"/><rect x="1522" y="295" width="1" height="42" fill="#e3964f"/><rect x="1521" y="301" width="3" height="19" fill="#e3964f"/><rect x="1526" y="271" width="1" height="41" fill="#e3964f"/><rect x="1525" y="276" width="3" height="25" fill="#e3964f"/><rect x="1530" y="263" width="1" height="30" fill="#ffffff"/><rect x="1529" y="276" width="3" height="7" fill="#ffffff"/><rect x="1534" y="281" width="1" height="35" fill="#ffffff"/><rect x="1533" y="283" width="3" height="22" fill="#ffffff"/><rect x="1538" y="302" width="1" height="31" fill="#ffffff"/><rect x="1537" y="303" width="3" height="29" fill="#ffffff"/><rect x="1542" y="327" width="1" height="36" fill="#ffffff"/><rect x="1541" y="329" width="3" height="25" fill="#ffffff"/><rect x="1546" y="341" width="1" height="29" fill="#ffffff"/><rect x="1545" y="342" width="3" height="4" fill="#ffffff"/><rect x="42" y="124" width="1" height="6" fill="#ffffff"/><rect x="41" y="124" width="3" height="6" fill="#ffffff"/></svg><div style="left:1549px;top:373px;width:40px;height:10px;background:#fff"></div><div class="t" style="left:1553px;top:374px;font-size:9px;color:#000">106.741</div><svg style="left:1539px;top:337px" width="9" height="9" viewBox="0 0 9 9"><path d="M4.5 0.5L8.5 4.5 4.5 8.5 0.5 4.5z" fill="#1428e8"/></svg><svg style="left:5px;top:85px" width="8" height="6" viewBox="0 0 8 6"><path d="M0 0h8L4 6z" fill="#fff"/></svg><div class="t" style="left:17px;top:83px;font-size:9px;color:#fff;-webkit-text-stroke:.2px #fff">CADJPY,M15&nbsp; 106.747 106.759 106.728 106.741</div><div class="t" style="left:6px;top:96px;font-size:8.5px;color:#fff;--cw:.84em"><i>イ</i><i>ン</i><i>ジ</i><i>ケ</i><i>ー</i><i>タ</i><i>ー</i> 'Saikix-RCI-Signal' <i>読</i><i>み</i><i>込</i><i>み</i><i>成</i><i>功</i></div><div class="t" style="left:1462px;top:84px;font-size:9px;color:#fff">Saikix-Signal EA</div><svg style="left:1532px;top:83px" width="12" height="12" viewBox="0 0 12 12"><circle cx="5.5" cy="5.5" r="4.8" fill="none" stroke="#fff"/><circle cx="3.8" cy="4.2" r=".8" fill="#fff"/><circle cx="7.2" cy="4.2" r=".8" fill="#fff"/><path d="M3 6.5q2.5 2.5 5 0" stroke="#fff" fill="none"/></svg><div class="t" style="left:8px;top:331px;font-size:9px;color:#fff">#97</div><div class="t" style="left:1408px;top:398px;font-size:12px;color:#74cc58;--cw:1em"><i>ロ</i><i>ン</i><i>グ</i><i>利</i><i>確</i></div><div class="t" style="left:1119px;top:413px;font-size:12px;color:#74cc58;--cw:1em"><i>グ</i><i>利</i><i>確</i></div><div class="t" style="left:614px;top:806px;font-size:12px;color:#6cbf52;--cw:1em"><i>シ</i><i>ョ</i><i>ー</i><i>ト</i><i>利</i><i>確</i></div><div style="left:1500px;top:150px;width:48px;height:40px;overflow:hidden"><div class="t" style="left:15px;top:16px;font-size:12px;color:#b445e6;--cw:1em">EA<i>売</i><i>り</i></div></div><div style="left:1500px;top:480px;width:48px;height:30px;overflow:hidden"><div class="t" style="left:18px;top:12px;font-size:12px;color:#74cc58;--cw:1em"><i>シ</i><i>ョ</i><i>ー</i></div></div><div style="left:400px;top:895px;width:100px;height:25px;overflow:hidden"><div class="t" style="left:10px;top:21px;font-size:12px;color:#e23a2a;--cw:1em"><i>ロ</i><i>ン</i><i>グ</i><i>損</i><i>切</i><i>り</i></div></div><div class="t" style="left:876px;top:819px;font-size:11px;color:#7cc6e2;--cw:1.05em">EA<i>買</i><i>い</i></div><svg style="left:885px;top:809px" width="17" height="20" viewBox="0 0 17 20"><path d="M8.5 1L16.5 9h-4v10h-8V9h-4z" fill="none" stroke="#5ccab8" stroke-width="1.4"/></svg><div class="t" style="left:1200px;top:819px;font-size:11px;color:#7cc6e2;--cw:1.05em">EA<i>買</i><i>い</i></div><svg style="left:1209px;top:809px" width="17" height="20" viewBox="0 0 17 20"><path d="M8.5 1L16.5 9h-4v10h-8V9h-4z" fill="none" stroke="#5ccab8" stroke-width="1.4"/></svg><svg style="left:1525px;top:196px" width="18" height="20" viewBox="0 0 18 20"><path d="M7 1h4v10h5l-7 8-7-8h5z" fill="none" stroke="#b445e6" stroke-width="1.5"/></svg><svg style="left:1428px;top:476px" width="20" height="17" viewBox="0 0 20 17"><path d="M1 10l5 5L19 1" fill="none" stroke="#62d64a" stroke-width="3"/></svg><svg style="left:1117px;top:490px" width="14" height="16" viewBox="0 0 14 16"><path d="M0 13L13 2" fill="none" stroke="#62d64a" stroke-width="3"/></svg><svg style="left:439px;top:909px" width="14" height="11" viewBox="0 0 14 11"><path d="M2 1l10 10M12 1L2 11" stroke="#ff3020" stroke-width="3"/></svg><div style="left:24px;top:160px;width:398px;height:430px;background:#191a22"></div><div style="left:22px;top:130px;width:400px;height:35px;background:#8b3fce;border-top:1px solid #7a2ec0;border-left:1px solid #9b55d8;border-right:1px solid #b070e8"></div><div style="left:23px;top:131px;width:398px;height:1px;background:#7228b8"></div><div style="left:22px;top:162px;width:400px;height:2px;background:#a45ee0"></div><div style="left:22px;top:164px;width:400px;height:1px;background:#12081e"></div><div class="t" style="left:37px;top:140px;font-size:16px;color:#f4eefa;--cw:.94em"><i>サ</i><i>イ</i><i>ン</i><i>で</i><i>エ</i><i>ン</i><i>ト</i><i>リ</i><i>ー</i><i>く</i><i>ん</i> by Saikix</div><div style="left:372px;top:140px;width:40px;height:20px;background:#7a2fc0;border:1px solid #5d1c9a;box-shadow:inset 1px 1px 0 #a070e0"></div><div class="t" style="left:382px;top:145px;font-size:11px;color:#f0e8f8">OFF</div><div class="t" style="left:37px;top:177px;font-size:13px;--cw:.9em;color:#f0f0f0"><i>モ</i><i>ー</i><i>ド</i>: Saikix-RCI-Signal</div><div style="left:37px;top:201px;width:308px;height:1px;background:#5a5a62"></div><div class="t" style="left:122px;top:213px;font-size:13px;--cw:.9em;color:#79c94e"><i>買</i><i>い</i></div><div class="t" style="left:201px;top:213px;font-size:13px;--cw:.9em;color:#e0674a"><i>売</i><i>り</i></div><div class="t" style="left:281px;top:213px;font-size:13px;--cw:.9em;color:#e8c25a"><i>合</i><i>計</i></div><div class="t" style="left:37px;top:231px;font-size:13px;--cw:.9em;color:#c4c4c8"><i>シ</i><i>グ</i><i>ナ</i><i>ル</i><i>数</i></div><div class="t" style="left:122px;top:231px;font-size:13px;--cw:.9em;color:#f2f2f2">7</div><div class="t" style="left:201px;top:231px;font-size:13px;--cw:.9em;color:#f2f2f2">11</div><div class="t" style="left:281px;top:231px;font-size:13px;--cw:.9em;color:#f2f2f2">18</div><div class="t" style="left:37px;top:249px;font-size:13px;--cw:.9em;color:#c4c4c8"><i>勝</i><i>ち</i><i>ト</i><i>レ</i><i>ー</i><i>ド</i></div><div class="t" style="left:122px;top:249px;font-size:13px;--cw:.9em;color:#f2f2f2">5</div><div class="t" style="left:201px;top:249px;font-size:13px;--cw:.9em;color:#f2f2f2">6</div><div class="t" style="left:281px;top:249px;font-size:13px;--cw:.9em;color:#f2f2f2">11</div><div class="t" style="left:37px;top:267px;font-size:13px;--cw:.9em;color:#c4c4c8"><i>負</i><i>け</i><i>ト</i><i>レ</i><i>ー</i><i>ド</i></div><div class="t" style="left:122px;top:267px;font-size:13px;--cw:.9em;color:#f2f2f2">2</div><div class="t" style="left:201px;top:267px;font-size:13px;--cw:.9em;color:#f2f2f2">5</div><div class="t" style="left:281px;top:267px;font-size:13px;--cw:.9em;color:#f2f2f2">7</div><div class="t" style="left:37px;top:285px;font-size:13px;--cw:.9em;color:#c4c4c8"><i>勝</i><i>率</i></div><div class="t" style="left:122px;top:285px;font-size:13px;--cw:.9em;color:#f2f2f2">71.4%</div><div class="t" style="left:201px;top:285px;font-size:13px;--cw:.9em;color:#f2f2f2">54.5%</div><div class="t" style="left:281px;top:285px;font-size:13px;--cw:.9em;color:#f2f2f2">61.1%</div><div class="t" style="left:37px;top:321px;font-size:13px;--cw:.9em;color:#c4c4c8"><i>最</i><i>大</i><i>利</i><i>益</i></div><div class="t" style="left:122px;top:321px;font-size:13px;--cw:.9em;color:#79c94e">26.6 pips</div><div class="t" style="left:201px;top:321px;font-size:13px;--cw:.9em;color:#79c94e">29.6 pips</div><div class="t" style="left:281px;top:321px;font-size:13px;--cw:.9em;color:#79c94e">29.6 pips</div><div class="t" style="left:37px;top:339px;font-size:13px;--cw:.9em;color:#c4c4c8"><i>最</i><i>大</i><i>損</i><i>失</i></div><div class="t" style="left:122px;top:339px;font-size:13px;--cw:.9em;color:#e0674a">-42.2 pips</div><div class="t" style="left:201px;top:339px;font-size:13px;--cw:.9em;color:#e0674a">-49.4 pips</div><div class="t" style="left:281px;top:339px;font-size:13px;--cw:.9em;color:#e0674a">-49.4 pips</div><div class="t" style="left:37px;top:357px;font-size:13px;--cw:.9em;color:#c4c4c8"><i>合</i><i>計</i><i>損</i><i>益</i></div><div class="t" style="left:122px;top:357px;font-size:13px;--cw:.9em;color:#79c94e">18.1 pips</div><div class="t" style="left:201px;top:357px;font-size:13px;--cw:.9em;color:#79c94e">5.4 pips</div><div class="t" style="left:281px;top:357px;font-size:13px;--cw:.9em;color:#79c94e">23.5 pips</div><div style="left:37px;top:399px;width:308px;height:1px;background:#5a5a62"></div><div class="t" style="left:37px;top:411px;font-size:13px;--cw:.9em;color:#c4c4c8"><i>現</i><i>在</i><i>の</i><i>ポ</i><i>ジ</i><i>シ</i><i>ョ</i><i>ン</i><i>情</i><i>報</i></div><div class="t" style="left:37px;top:429px;font-size:13px;--cw:.9em;color:#f2f2f2;font-weight:bold"><i>ポ</i><i>ジ</i><i>シ</i><i>ョ</i><i>ン</i><i>数</i>: 1 / 1</div><div class="t" style="left:37px;top:447px;font-size:13px;--cw:.9em;color:#79c94e"><i>ト</i><i>レ</i><i>ー</i><i>ド</i><i>実</i><i>行</i>: <i>有</i><i>効</i></div><div class="t" style="left:37px;top:465px;font-size:13px;--cw:.9em;color:#f2f2f2"><i>決</i><i>済</i><i>モ</i><i>ー</i><i>ド</i>: <i>シ</i><i>グ</i><i>ナ</i><i>ル</i><i>決</i><i>済</i></div><div class="t" style="left:37px;top:483px;font-size:13px;--cw:.9em;color:#f2f2f2"><i>エ</i><i>ン</i><i>ト</i><i>リ</i><i>ー</i>: <i>リ</i><i>ア</i><i>ル</i><i>タ</i><i>イ</i><i>ム</i><i>エ</i><i>ン</i><i>ト</i><i>リ</i><i>ー</i></div><div class="t" style="left:37px;top:501px;font-size:13px;--cw:.9em;color:#c4c4c8"><i>最</i><i>新</i><i>シ</i><i>グ</i><i>ナ</i><i>ル</i><i>情</i><i>報</i></div><div class="t" style="left:37px;top:519px;font-size:13px;--cw:.9em;color:#f2f2f2"><i>買</i><i>い</i>: <i>な</i><i>し</i></div><div class="t" style="left:37px;top:537px;font-size:13px;--cw:.9em;color:#f2f2f2"><i>売</i><i>り</i>: <i>な</i><i>し</i></div><div style="left:24px;top:588px;width:398px;height:2px;background:#3a3b42"></div><div style="left:418px;top:159px;width:701px;height:636px;background:#f3f3f3;border:1px solid #dcdcdc;border-radius:7px;box-shadow:0 0 6px rgba(0,0,0,.2)"></div><div class="t" style="left:426px;top:169px;font-size:11.5px;color:#1a1a1a">Expert - Saikix-Signal EA</div><div class="t" style="left:1047px;top:167px;font-size:13px;color:#222">?</div><svg style="left:1090px;top:167px" width="12" height="12" viewBox="0 0 12 12"><path d="M1 1l10 10M11 1L1 11" stroke="#222" stroke-width="1.2"/></svg><div style="left:426px;top:219px;width:688px;height:542px;background:#f9f9f9;border:1px solid #e2e2e2"></div><div style="left:428px;top:199px;width:78px;height:21px;background:#f3f3f3;border:1px solid #dcdcdc;border-bottom:none"></div><div style="left:506px;top:199px;width:47px;height:21px;background:#f3f3f3;border:1px solid #dcdcdc;border-bottom:none;border-left:none"></div><div style="left:553px;top:197px;width:100px;height:23px;background:#f9f9f9;border:1px solid #dcdcdc;border-bottom:none"></div><div class="t" style="left:433px;top:205px;font-size:11.5px;color:#222;--cw:.82em"><i>バ</i><i>ー</i><i>ジ</i><i>ョ</i><i>ン</i><i>情</i><i>報</i></div><div class="t" style="left:514px;top:205px;font-size:11.5px;color:#222"><i>全</i><i>般</i></div><div class="t" style="left:561px;top:203px;font-size:11.5px;color:#222;--cw:.82em"><i>パ</i><i>ラ</i><i>メ</i><i>ー</i><i>タ</i><i>ー</i><i>の</i><i>入</i><i>力</i></div><div style="left:437px;top:229px;width:536px;height:522px;background:#fff;border:1px solid #8c8c8c"></div><div style="left:438px;top:230px;width:515px;height:25px;background:#fff"></div><div style="left:695px;top:230px;width:1px;height:24px;background:#e5e5e5"></div><div class="t" style="left:445px;top:238px;font-size:11.5px;color:#333"><i>変</i><i>数</i></div><div class="t" style="left:701px;top:238px;font-size:11.5px;color:#333"><i>値</i></div><div style="left:954px;top:230px;width:18px;height:520px;background:#f0f0f0"></div><div style="left:962px;top:291px;width:3px;height:68px;background:#8a8a8a;border-radius:2px"></div><div style="left:438px;top:255px;width:515px;height:20px;background:#ebebeb;overflow:hidden"><svg style="left:2px;top:2px" width="17" height="17" viewBox="0 0 17 17"><path d="M0.5 0.5h11l4 4v11l-1.5-1-1.5 1-1.5-1-1.5 1-1.5-1-1.5 1-1.5-1-1.5 1-1.5-1-1.5 1z" fill="#f2e08e" stroke="#b89a3a"/><path d="M11.5 0.5v4h4" fill="#fff7cf" stroke="#b89a3a"/><text x="2" y="11" font-size="9" font-weight="bold" font-family="Liberation Sans" fill="#2a2a2a">ab</text></svg><div class="t" style="left:22px;top:5px;font-size:11.5px;color:#222">Category3</div><div style="left:257px;top:0;width:1px;height:20px;background:#d6d6d6"></div><div class="t" style="left:261px;top:5px;font-size:11.5px;color:#222">======<i>イ</i><i>グ</i><i>ジ</i><i>ッ</i><i>ト</i><i>設</i><i>定</i>======</div><div style="left:0;top:19px;width:515px;height:1px;background:#cdcdcd"></div></div><div style="left:438px;top:275px;width:515px;height:20px;background:#ffffff;overflow:hidden"><svg style="left:2px;top:2px" width="17" height="17" viewBox="0 0 17 17"><path d="M0.5 0.5h11l4 4v11l-1.5-1-1.5 1-1.5-1-1.5 1-1.5-1-1.5 1-1.5-1-1.5 1-1.5-1-1.5 1z" fill="#9fe08f" stroke="#3f9a3a"/><path d="M11.5 0.5v4h4" fill="#d8f5d0" stroke="#3f9a3a"/><path d="M3 11l4-4M8 10.5h2.5l1-1h1.5" stroke="#145e14" stroke-width="1.6" fill="none"/></svg><div class="t" style="left:22px;top:5px;font-size:11.5px;color:#222"><i>シ</i><i>グ</i><i>ナ</i><i>ル</i><i>決</i><i>済</i><i>使</i><i>用</i></div><div style="left:257px;top:0;width:1px;height:20px;background:#d6d6d6"></div><div class="t" style="left:261px;top:5px;font-size:11.5px;color:#222">true</div><div style="left:0;top:19px;width:515px;height:1px;background:#cdcdcd"></div></div><div style="left:438px;top:295px;width:515px;height:20px;background:#ebebeb;overflow:hidden"><svg style="left:2px;top:2px" width="17" height="17" viewBox="0 0 17 17"><path d="M0.5 0.5h11l4 4v11l-1.5-1-1.5 1-1.5-1-1.5 1-1.5-1-1.5 1-1.5-1-1.5 1-1.5-1-1.5 1z" fill="#9fe08f" stroke="#3f9a3a"/><path d="M11.5 0.5v4h4" fill="#d8f5d0" stroke="#3f9a3a"/><path d="M3 11l4-4M8 10.5h2.5l1-1h1.5" stroke="#145e14" stroke-width="1.6" fill="none"/></svg><div class="t" style="left:22px;top:5px;font-size:11.5px;color:#222"><i>固</i><i>定</i>SLTP<i>使</i><i>用</i></div><div style="left:257px;top:0;width:1px;height:20px;background:#d6d6d6"></div><div class="t" style="left:261px;top:5px;font-size:11.5px;color:#222">false</div><div style="left:0;top:19px;width:515px;height:1px;background:#cdcdcd"></div></div><div style="left:438px;top:315px;width:515px;height:20px;background:#ffffff;overflow:hidden"><svg style="left:2px;top:2px" width="17" height="17" viewBox="0 0 17 17"><path d="M0.5 0.5h11l4 4v11l-1.5-1-1.5 1-1.5-1-1.5 1-1.5-1-1.5 1-1.5-1-1.5 1-1.5-1-1.5 1z" fill="#b4e3f3" stroke="#3c9cc6"/><path d="M11.5 0.5v4h4" fill="#e2f6fc" stroke="#3c9cc6"/><text x="2" y="11" font-size="8" font-weight="bold" font-family="Liberation Sans" fill="#1d4f7a">1/2</text></svg><div class="t" style="left:22px;top:5px;font-size:11.5px;color:#222"><i>利</i><i>確</i>pips<i>（</i>0=<i>無</i><i>効</i><i>）</i></div><div style="left:257px;top:0;width:1px;height:20px;background:#d6d6d6"></div><div class="t" style="left:261px;top:5px;font-size:11.5px;color:#222">50.0</div><div style="left:0;top:19px;width:515px;height:1px;background:#cdcdcd"></div></div><div style="left:438px;top:335px;width:515px;height:20px;background:#ebebeb;overflow:hidden"><svg style="left:2px;top:2px" width="17" height="17" viewBox="0 0 17 17"><path d="M0.5 0.5h11l4 4v11l-1.5-1-1.5 1-1.5-1-1.5 1-1.5-1-1.5 1-1.5-1-1.5 1-1.5-1-1.5 1z" fill="#b4e3f3" stroke="#3c9cc6"/><path d="M11.5 0.5v4h4" fill="#e2f6fc" stroke="#3c9cc6"/><text x="2" y="11" font-size="8" font-weight="bold" font-family="Liberation Sans" fill="#1d4f7a">1/2</text></svg><div class="t" style="left:22px;top:5px;font-size:11.5px;color:#222"><i>損</i><i>切</i><i>り</i>pips<i>（</i>0=<i>無</i><i>効</i><i>）</i></div><div style="left:257px;top:0;width:1px;height:20px;background:#d6d6d6"></div><div class="t" style="left:261px;top:5px;font-size:11.5px;color:#222">30.0</div><div style="left:0;top:19px;width:515px;height:1px;background:#cdcdcd"></div></div><div style="left:438px;top:355px;width:515px;height:20px;background:#ffffff;overflow:hidden"><svg style="left:2px;top:2px" width="17" height="17" viewBox="0 0 17 17"><path d="M0.5 0.5h11l4 4v11l-1.5-1-1.5 1-1.5-1-1.5 1-1.5-1-1.5 1-1.5-1-1.5 1-1.5-1-1.5 1z" fill="#9fe08f" stroke="#3f9a3a"/><path d="M11.5 0.5v4h4" fill="#d8f5d0" stroke="#3f9a3a"/><path d="M3 11l4-4M8 10.5h2.5l1-1h1.5" stroke="#145e14" stroke-width="1.6" fill="none"/></svg><div class="t" style="left:22px;top:5px;font-size:11.5px;color:#222"><i>時</i><i>間</i><i>決</i><i>済</i><i>使</i><i>用</i></div><div style="left:257px;top:0;width:1px;height:20px;background:#d6d6d6"></div><div class="t" style="left:261px;top:5px;font-size:11.5px;color:#222">false</div><div style="left:0;top:19px;width:515px;height:1px;background:#cdcdcd"></div></div><div style="left:438px;top:375px;width:515px;height:20px;background:#ebebeb;overflow:hidden"><svg style="left:2px;top:2px" width="17" height="17" viewBox="0 0 17 17"><path d="M0.5 0.5h11l4 4v11l-1.5-1-1.5 1-1.5-1-1.5 1-1.5-1-1.5 1-1.5-1-1.5 1-1.5-1-1.5 1z" fill="#a9c9ef" stroke="#3a70b8"/><path d="M11.5 0.5v4h4" fill="#dce9f9" stroke="#3a70b8"/><text x="1" y="12" font-size="7.5" font-family="Liberation Sans" font-weight="bold" fill="#14306a">123</text></svg><div class="t" style="left:22px;top:5px;font-size:11.5px;color:#222"><i>決</i><i>済</i><i>時</i><i>間</i><i>（</i><i>分</i><i>）</i></div><div style="left:257px;top:0;width:1px;height:20px;background:#d6d6d6"></div><div class="t" style="left:261px;top:5px;font-size:11.5px;color:#222">60</div><div style="left:0;top:19px;width:515px;height:1px;background:#cdcdcd"></div></div><div style="left:438px;top:395px;width:515px;height:20px;background:#ffffff;overflow:hidden"><svg style="left:2px;top:2px" width="17" height="17" viewBox="0 0 17 17"><path d="M0.5 0.5h11l4 4v11l-1.5-1-1.5 1-1.5-1-1.5 1-1.5-1-1.5 1-1.5-1-1.5 1-1.5-1-1.5 1z" fill="#9fe08f" stroke="#3f9a3a"/><path d="M11.5 0.5v4h4" fill="#d8f5d0" stroke="#3f9a3a"/><path d="M3 11l4-4M8 10.5h2.5l1-1h1.5" stroke="#145e14" stroke-width="1.6" fill="none"/></svg><div class="t" style="left:22px;top:5px;font-size:11.5px;color:#222"><i>ト</i><i>レ</i><i>イ</i><i>ル</i><i>決</i><i>済</i><i>使</i><i>用</i></div><div style="left:257px;top:0;width:1px;height:20px;background:#d6d6d6"></div><div class="t" style="left:261px;top:5px;font-size:11.5px;color:#222">false</div><div style="left:0;top:19px;width:515px;height:1px;background:#cdcdcd"></div></div><div style="left:438px;top:415px;width:515px;height:20px;background:#3173cc;overflow:hidden"><svg style="left:2px;top:2px" width="17" height="17" viewBox="0 0 17 17"><path d="M0.5 0.5h11l4 4v11l-1.5-1-1.5 1-1.5-1-1.5 1-1.5-1-1.5 1-1.5-1-1.5 1-1.5-1-1.5 1z" fill="#b4e3f3" stroke="#3c9cc6"/><path d="M11.5 0.5v4h4" fill="#e2f6fc" stroke="#3c9cc6"/><text x="2" y="11" font-size="8" font-weight="bold" font-family="Liberation Sans" fill="#1d4f7a">1/2</text></svg><div class="t" style="left:22px;top:5px;font-size:11.5px;color:#fff"><i>ト</i><i>レ</i><i>イ</i><i>ル</i><i>開</i><i>始</i>pips</div><div style="left:257px;top:0;width:1px;height:20px;background:#5a8ed8"></div><div class="t" style="left:261px;top:5px;font-size:11.5px;color:#fff">20.0</div><div style="left:0;top:19px;width:515px;height:1px;background:#3173cc"></div></div><div style="left:438px;top:435px;width:515px;height:20px;background:#ffffff;overflow:hidden"><svg style="left:2px;top:2px" width="17" height="17" viewBox="0 0 17 17"><path d="M0.5 0.5h11l4 4v11l-1.5-1-1.5 1-1.5-1-1.5 1-1.5-1-1.5 1-1.5-1-1.5 1-1.5-1-1.5 1z" fill="#b4e3f3" stroke="#3c9cc6"/><path d="M11.5 0.5v4h4" fill="#e2f6fc" stroke="#3c9cc6"/><text x="2" y="11" font-size="8" font-weight="bold" font-family="Liberation Sans" fill="#1d4f7a">1/2</text></svg><div class="t" style="left:22px;top:5px;font-size:11.5px;color:#222"><i>ト</i><i>レ</i><i>イ</i><i>ル</i><i>ス</i><i>テ</i><i>ッ</i><i>プ</i>pips</div><div style="left:257px;top:0;width:1px;height:20px;background:#d6d6d6"></div><div class="t" style="left:261px;top:5px;font-size:11.5px;color:#222">10.0</div><div style="left:0;top:19px;width:515px;height:1px;background:#cdcdcd"></div></div><div style="left:438px;top:455px;width:515px;height:20px;background:#ebebeb;overflow:hidden"><svg style="left:2px;top:2px" width="17" height="17" viewBox="0 0 17 17"><path d="M0.5 0.5h11l4 4v11l-1.5-1-1.5 1-1.5-1-1.5 1-1.5-1-1.5 1-1.5-1-1.5 1-1.5-1-1.5 1z" fill="#b4e3f3" stroke="#3c9cc6"/><path d="M11.5 0.5v4h4" fill="#e2f6fc" stroke="#3c9cc6"/><text x="2" y="11" font-size="8" font-weight="bold" font-family="Liberation Sans" fill="#1d4f7a">1/2</text></svg><div class="t" style="left:22px;top:5px;font-size:11.5px;color:#222"><i>ト</i><i>レ</i><i>イ</i><i>ル</i><i>ス</i><i>ト</i><i>ッ</i><i>プ</i>pips</div><div style="left:257px;top:0;width:1px;height:20px;background:#d6d6d6"></div><div class="t" style="left:261px;top:5px;font-size:11.5px;color:#222">15.0</div><div style="left:0;top:19px;width:515px;height:1px;background:#cdcdcd"></div></div><div style="left:438px;top:475px;width:515px;height:20px;background:#ffffff;overflow:hidden"><svg style="left:2px;top:2px" width="17" height="17" viewBox="0 0 17 17"><path d="M0.5 0.5h11l4 4v11l-1.5-1-1.5 1-1.5-1-1.5 1-1.5-1-1.5 1-1.5-1-1.5 1-1.5-1-1.5 1z" fill="#f2e08e" stroke="#b89a3a"/><path d="M11.5 0.5v4h4" fill="#fff7cf" stroke="#b89a3a"/><text x="2" y="11" font-size="9" font-weight="bold" font-family="Liberation Sans" fill="#2a2a2a">ab</text></svg><div class="t" style="left:22px;top:5px;font-size:11.5px;color:#222">Category4</div><div style="left:257px;top:0;width:1px;height:20px;background:#d6d6d6"></div><div class="t" style="left:261px;top:5px;font-size:11.5px;color:#222">======<i>資</i><i>金</i><i>管</i><i>理</i>======</div><div style="left:0;top:19px;width:515px;height:1px;background:#cdcdcd"></div></div><div style="left:438px;top:495px;width:515px;height:20px;background:#ebebeb;overflow:hidden"><svg style="left:2px;top:2px" width="17" height="17" viewBox="0 0 17 17"><path d="M0.5 0.5h11l4 4v11l-1.5-1-1.5 1-1.5-1-1.5 1-1.5-1-1.5 1-1.5-1-1.5 1-1.5-1-1.5 1z" fill="#b4e3f3" stroke="#3c9cc6"/><path d="M11.5 0.5v4h4" fill="#e2f6fc" stroke="#3c9cc6"/><text x="2" y="11" font-size="8" font-weight="bold" font-family="Liberation Sans" fill="#1d4f7a">1/2</text></svg><div class="t" style="left:22px;top:5px;font-size:11.5px;color:#222"><i>ロ</i><i>ッ</i><i>ト</i><i>サ</i><i>イ</i><i>ズ</i><i>（</i><i>自</i><i>動</i><i>計</i><i>算</i>OFF<i>時</i><i>の</i><i>固</i><i>定</i><i>値</i><i>）</i></div><div style="left:257px;top:0;width:1px;height:20px;background:#d6d6d6"></div><div class="t" style="left:261px;top:5px;font-size:11.5px;color:#222">0.1</div><div style="left:0;top:19px;width:515px;height:1px;background:#cdcdcd"></div></div><div style="left:438px;top:515px;width:515px;height:20px;background:#ffffff;overflow:hidden"><svg style="left:2px;top:2px" width="17" height="17" viewBox="0 0 17 17"><path d="M0.5 0.5h11l4 4v11l-1.5-1-1.5 1-1.5-1-1.5 1-1.5-1-1.5 1-1.5-1-1.5 1-1.5-1-1.5 1z" fill="#9fe08f" stroke="#3f9a3a"/><path d="M11.5 0.5v4h4" fill="#d8f5d0" stroke="#3f9a3a"/><path d="M3 11l4-4M8 10.5h2.5l1-1h1.5" stroke="#145e14" stroke-width="1.6" fill="none"/></svg><div class="t" style="left:22px;top:5px;font-size:11.5px;color:#222"><i>自</i><i>動</i><i>ロ</i><i>ッ</i><i>ト</i><i>計</i><i>算</i><i>モ</i><i>ー</i><i>ド</i></div><div style="left:257px;top:0;width:1px;height:20px;background:#d6d6d6"></div><div class="t" style="left:261px;top:5px;font-size:11.5px;color:#222">false</div><div style="left:0;top:19px;width:515px;height:1px;background:#cdcdcd"></div></div><div style="left:438px;top:535px;width:515px;height:20px;background:#ebebeb;overflow:hidden"><svg style="left:2px;top:2px" width="17" height="17" viewBox="0 0 17 17"><path d="M0.5 0.5h11l4 4v11l-1.5-1-1.5 1-1.5-1-1.5 1-1.5-1-1.5 1-1.5-1-1.5 1-1.5-1-1.5 1z" fill="#b4e3f3" stroke="#3c9cc6"/><path d="M11.5 0.5v4h4" fill="#e2f6fc" stroke="#3c9cc6"/><text x="2" y="11" font-size="8" font-weight="bold" font-family="Liberation Sans" fill="#1d4f7a">1/2</text></svg><div class="t" style="left:22px;top:5px;font-size:11.5px;color:#222">1<i>ト</i><i>レ</i><i>ー</i><i>ド</i><i>の</i><i>最</i><i>大</i><i>損</i><i>失</i><i>（</i><i>残</i><i>高</i><i>の</i>%<i>）</i></div><div style="left:257px;top:0;width:1px;height:20px;background:#d6d6d6"></div><div class="t" style="left:261px;top:5px;font-size:11.5px;color:#222">1.0</div><div style="left:0;top:19px;width:515px;height:1px;background:#cdcdcd"></div></div><div style="left:438px;top:555px;width:515px;height:20px;background:#ffffff;overflow:hidden"><svg style="left:2px;top:2px" width="17" height="17" viewBox="0 0 17 17"><path d="M0.5 0.5h11l4 4v11l-1.5-1-1.5 1-1.5-1-1.5 1-1.5-1-1.5 1-1.5-1-1.5 1-1.5-1-1.5 1z" fill="#b4e3f3" stroke="#3c9cc6"/><path d="M11.5 0.5v4h4" fill="#e2f6fc" stroke="#3c9cc6"/><text x="2" y="11" font-size="8" font-weight="bold" font-family="Liberation Sans" fill="#1d4f7a">1/2</text></svg><div class="t" style="left:22px;top:5px;font-size:11.5px;color:#222"><i>想</i><i>定</i><i>リ</i><i>ス</i><i>ク</i>pips<i>（</i><i>シ</i><i>グ</i><i>ナ</i><i>ル</i><i>決</i><i>済</i><i>時</i><i>の</i><i>み</i><i>）</i></div><div style="left:257px;top:0;width:1px;height:20px;background:#d6d6d6"></div><div class="t" style="left:261px;top:5px;font-size:11.5px;color:#222">100.0</div><div style="left:0;top:19px;width:515px;height:1px;background:#cdcdcd"></div></div><div style="left:438px;top:575px;width:515px;height:20px;background:#ebebeb;overflow:hidden"><svg style="left:2px;top:2px" width="17" height="17" viewBox="0 0 17 17"><path d="M0.5 0.5h11l4 4v11l-1.5-1-1.5 1-1.5-1-1.5 1-1.5-1-1.5 1-1.5-1-1.5 1-1.5-1-1.5 1z" fill="#b4e3f3" stroke="#3c9cc6"/><path d="M11.5 0.5v4h4" fill="#e2f6fc" stroke="#3c9cc6"/><text x="2" y="11" font-size="8" font-weight="bold" font-family="Liberation Sans" fill="#1d4f7a">1/2</text></svg><div class="t" style="left:22px;top:5px;font-size:11.5px;color:#222"><i>最</i><i>大</i><i>ロ</i><i>ッ</i><i>ト</i><i>数</i></div><div style="left:257px;top:0;width:1px;height:20px;background:#d6d6d6"></div><div class="t" style="left:261px;top:5px;font-size:11.5px;color:#222">5.0</div><div style="left:0;top:19px;width:515px;height:1px;background:#cdcdcd"></div></div><div style="left:438px;top:595px;width:515px;height:20px;background:#ffffff;overflow:hidden"><svg style="left:2px;top:2px" width="17" height="17" viewBox="0 0 17 17"><path d="M0.5 0.5h11l4 4v11l-1.5-1-1.5 1-1.5-1-1.5 1-1.5-1-1.5 1-1.5-1-1.5 1-1.5-1-1.5 1z" fill="#f2e08e" stroke="#b89a3a"/><path d="M11.5 0.5v4h4" fill="#fff7cf" stroke="#b89a3a"/><text x="2" y="11" font-size="9" font-weight="bold" font-family="Liberation Sans" fill="#2a2a2a">ab</text></svg><div class="t" style="left:22px;top:5px;font-size:11.5px;color:#222">Category5</div><div style="left:257px;top:0;width:1px;height:20px;background:#d6d6d6"></div><div class="t" style="left:261px;top:5px;font-size:11.5px;color:#222">======<i>通</i><i>知</i><i>設</i><i>定</i>======</div><div style="left:0;top:19px;width:515px;height:1px;background:#cdcdcd"></div></div><div style="left:438px;top:615px;width:515px;height:20px;background:#ebebeb;overflow:hidden"><svg style="left:2px;top:2px" width="17" height="17" viewBox="0 0 17 17"><path d="M0.5 0.5h11l4 4v11l-1.5-1-1.5 1-1.5-1-1.5 1-1.5-1-1.5 1-1.5-1-1.5 1-1.5-1-1.5 1z" fill="#9fe08f" stroke="#3f9a3a"/><path d="M11.5 0.5v4h4" fill="#d8f5d0" stroke="#3f9a3a"/><path d="M3 11l4-4M8 10.5h2.5l1-1h1.5" stroke="#145e14" stroke-width="1.6" fill="none"/></svg><div class="t" style="left:22px;top:5px;font-size:11.5px;color:#222"><i>ア</i><i>ラ</i><i>ー</i><i>ト</i><i>通</i><i>知</i></div><div style="left:257px;top:0;width:1px;height:20px;background:#d6d6d6"></div><div class="t" style="left:261px;top:5px;font-size:11.5px;color:#222">false</div><div style="left:0;top:19px;width:515px;height:1px;background:#cdcdcd"></div></div><div style="left:438px;top:635px;width:515px;height:20px;background:#ffffff;overflow:hidden"><svg style="left:2px;top:2px" width="17" height="17" viewBox="0 0 17 17"><path d="M0.5 0.5h11l4 4v11l-1.5-1-1.5 1-1.5-1-1.5 1-1.5-1-1.5 1-1.5-1-1.5 1-1.5-1-1.5 1z" fill="#9fe08f" stroke="#3f9a3a"/><path d="M11.5 0.5v4h4" fill="#d8f5d0" stroke="#3f9a3a"/><path d="M3 11l4-4M8 10.5h2.5l1-1h1.5" stroke="#145e14" stroke-width="1.6" fill="none"/></svg><div class="t" style="left:22px;top:5px;font-size:11.5px;color:#222"><i>プ</i><i>ッ</i><i>シ</i><i>ュ</i><i>通</i><i>知</i></div><div style="left:257px;top:0;width:1px;height:20px;background:#d6d6d6"></div><div class="t" style="left:261px;top:5px;font-size:11.5px;color:#222">false</div><div style="left:0;top:19px;width:515px;height:1px;background:#cdcdcd"></div></div><div style="left:438px;top:655px;width:515px;height:20px;background:#ebebeb;overflow:hidden"><svg style="left:2px;top:2px" width="17" height="17" viewBox="0 0 17 17"><path d="M0.5 0.5h11l4 4v11l-1.5-1-1.5 1-1.5-1-1.5 1-1.5-1-1.5 1-1.5-1-1.5 1-1.5-1-1.5 1z" fill="#9fe08f" stroke="#3f9a3a"/><path d="M11.5 0.5v4h4" fill="#d8f5d0" stroke="#3f9a3a"/><path d="M3 11l4-4M8 10.5h2.5l1-1h1.5" stroke="#145e14" stroke-width="1.6" fill="none"/></svg><div class="t" style="left:22px;top:5px;font-size:11.5px;color:#222"><i>メ</i><i>ー</i><i>ル</i><i>通</i><i>知</i><i>（</i><i>詳</i><i>細</i><i>ト</i><i>レ</i><i>ー</i><i>ド</i><i>結</i><i>果</i><i>）</i></div><div style="left:257px;top:0;width:1px;height:20px;background:#d6d6d6"></div><div class="t" style="left:261px;top:5px;font-size:11.5px;color:#222">false</div><div style="left:0;top:19px;width:515px;height:1px;background:#cdcdcd"></div></div><div style="left:438px;top:675px;width:515px;height:20px;background:#ffffff;overflow:hidden"><svg style="left:2px;top:2px" width="17" height="17" viewBox="0 0 17 17"><path d="M0.5 0.5h11l4 4v11l-1.5-1-1.5 1-1.5-1-1.5 1-1.5-1-1.5 1-1.5-1-1.5 1-1.5-1-1.5 1z" fill="#f2e08e" stroke="#b89a3a"/><path d="M11.5 0.5v4h4" fill="#fff7cf" stroke="#b89a3a"/><text x="2" y="11" font-size="9" font-weight="bold" font-family="Liberation Sans" fill="#2a2a2a">ab</text></svg><div class="t" style="left:22px;top:5px;font-size:11.5px;color:#222">Category6</div><div style="left:257px;top:0;width:1px;height:20px;background:#d6d6d6"></div><div class="t" style="left:261px;top:5px;font-size:11.5px;color:#222">======<i>モ</i><i>ニ</i><i>タ</i><i>ー</i><i>設</i><i>定</i>======</div><div style="left:0;top:19px;width:515px;height:1px;background:#cdcdcd"></div></div><div style="left:438px;top:695px;width:515px;height:20px;background:#ebebeb;overflow:hidden"><svg style="left:2px;top:2px" width="17" height="17" viewBox="0 0 17 17"><path d="M0.5 0.5h11l4 4v11l-1.5-1-1.5 1-1.5-1-1.5 1-1.5-1-1.5 1-1.5-1-1.5 1-1.5-1-1.5 1z" fill="#9fe08f" stroke="#3f9a3a"/><path d="M11.5 0.5v4h4" fill="#d8f5d0" stroke="#3f9a3a"/><path d="M3 11l4-4M8 10.5h2.5l1-1h1.5" stroke="#145e14" stroke-width="1.6" fill="none"/></svg><div class="t" style="left:22px;top:5px;font-size:11.5px;color:#222"><i>モ</i><i>ニ</i><i>タ</i><i>ー</i><i>パ</i><i>ネ</i><i>ル</i><i>表</i><i>示</i></div><div style="left:257px;top:0;width:1px;height:20px;background:#d6d6d6"></div><div class="t" style="left:261px;top:5px;font-size:11.5px;color:#222">true</div><div style="left:0;top:19px;width:515px;height:1px;background:#cdcdcd"></div></div><div style="left:438px;top:715px;width:515px;height:20px;background:#ffffff;overflow:hidden"><svg style="left:2px;top:2px" width="17" height="17" viewBox="0 0 17 17"><path d="M0.5 0.5h11l4 4v11l-1.5-1-1.5 1-1.5-1-1.5 1-1.5-1-1.5 1-1.5-1-1.5 1-1.5-1-1.5 1z" fill="#9fe08f" stroke="#3f9a3a"/><path d="M11.5 0.5v4h4" fill="#d8f5d0" stroke="#3f9a3a"/><path d="M3 11l4-4M8 10.5h2.5l1-1h1.5" stroke="#145e14" stroke-width="1.6" fill="none"/></svg><div class="t" style="left:22px;top:5px;font-size:11.5px;color:#222"><i>診</i><i>断</i><i>モ</i><i>ー</i><i>ド</i><i>（</i><i>モ</i><i>ニ</i><i>タ</i><i>ー</i><i>に</i><i>バ</i><i>ッ</i><i>フ</i><i>ァ</i><i>情</i><i>報</i><i>表</i><i>示</i><i>）</i></div><div style="left:257px;top:0;width:1px;height:20px;background:#d6d6d6"></div><div class="t" style="left:261px;top:5px;font-size:11.5px;color:#222">false</div><div style="left:0;top:19px;width:515px;height:1px;background:#cdcdcd"></div></div><div style="left:438px;top:735px;width:515px;height:15px;background:#ebebeb;overflow:hidden"><svg style="left:2px;top:2px" width="17" height="17" viewBox="0 0 17 17"><path d="M0.5 0.5h11l4 4v11l-1.5-1-1.5 1-1.5-1-1.5 1-1.5-1-1.5 1-1.5-1-1.5 1-1.5-1-1.5 1z" fill="#a9c9ef" stroke="#3a70b8"/><path d="M11.5 0.5v4h4" fill="#dce9f9" stroke="#3a70b8"/><text x="1" y="12" font-size="7.5" font-family="Liberation Sans" font-weight="bold" fill="#14306a">123</text></svg><div class="t" style="left:22px;top:5px;font-size:11.5px;color:#222"><i>バ</i><i>ッ</i><i>ク</i><i>テ</i><i>ス</i><i>ト</i><i>対</i><i>象</i><i>期</i><i>間</i><i>（</i><i>本</i><i>数</i><i>）</i></div><div style="left:257px;top:0;width:1px;height:20px;background:#d6d6d6"></div><div class="t" style="left:261px;top:5px;font-size:11.5px;color:#222">2000</div><div style="left:0;top:19px;width:515px;height:1px;background:#cdcdcd"></div></div><div style="left:982px;top:688px;width:121px;height:24px;background:#fdfdfd;border:1px solid #d0d0d0;border-bottom-color:#b8b8b8;border-radius:4px;"><div class="t" style="left:0;width:119px;top:6px;font-size:11.5px;color:#1a1a1a;text-align:center"><i>読</i><i>み</i><i>込</i><i>み</i> (L)</div></div><div style="left:982px;top:725px;width:121px;height:24px;background:#fdfdfd;border:1px solid #d0d0d0;border-bottom-color:#b8b8b8;border-radius:4px;"><div class="t" style="left:0;width:119px;top:6px;font-size:11.5px;color:#1a1a1a;text-align:center"><i>保</i><i>存</i> (S)</div></div><div style="left:835px;top:762px;width:86px;height:24px;background:#fdfdfd;border:1px solid #d0d0d0;border-bottom-color:#b8b8b8;border-radius:4px;border:1px solid #3a6fb8;border-bottom-color:#2c5ea6"><div class="t" style="left:0;width:84px;top:6px;font-size:11.5px;color:#1a1a1a;text-align:center">OK</div></div><div style="left:930px;top:762px;width:86px;height:24px;background:#fdfdfd;border:1px solid #d0d0d0;border-bottom-color:#b8b8b8;border-radius:4px;"><div class="t" style="left:0;width:84px;top:6px;font-size:11.5px;color:#1a1a1a;text-align:center"><i>キ</i><i>ャ</i><i>ン</i><i>セ</i><i>ル</i></div></div><div style="left:1024px;top:762px;width:86px;height:24px;background:#fdfdfd;border:1px solid #d0d0d0;border-bottom-color:#b8b8b8;border-radius:4px;"><div class="t" style="left:0;width:84px;top:6px;font-size:11.5px;color:#1a1a1a;text-align:center"><i>リ</i><i>セ</i><i>ッ</i><i>ト</i></div></div><div style="left:1114px;top:785px;width:2px;height:2px;background:#a4a4a4"></div><div style="left:1111px;top:788px;width:2px;height:2px;background:#a4a4a4"></div><div style="left:1114px;top:788px;width:2px;height:2px;background:#a4a4a4"></div><div style="left:1108px;top:791px;width:2px;height:2px;background:#a4a4a4"></div><div style="left:1111px;top:791px;width:2px;height:2px;background:#a4a4a4"></div><div style="left:1114px;top:791px;width:2px;height:2px;background:#a4a4a4"></div></body></html>
